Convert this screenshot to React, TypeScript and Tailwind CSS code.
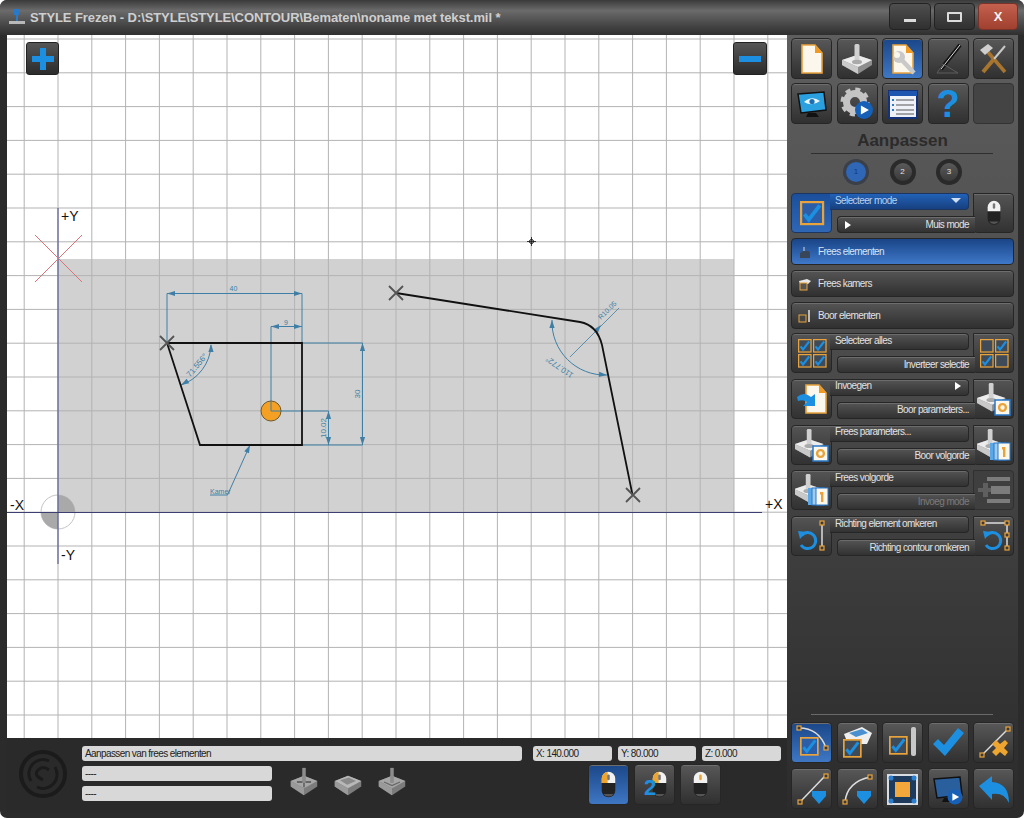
import type { ReactNode } from 'react'

const DIM = '#3f7fa5'
const BLUE = '#1c8fe0'
const ORANGE = '#e8a33c'

function Ic({ children, s = 34, box = 34 }: { children: ReactNode; s?: number; box?: number }) {
  return (
    <svg viewBox={`0 0 ${box} ${box}`} width={s} height={s} className="block shrink-0">
      {children}
    </svg>
  )
}

// icon parts, all in a 34 box
function Page({ x = 0, y = 0 }: { x?: number; y?: number }) {
  return (
    <g transform={`translate(${x} ${y})`}>
      <path d="M7 3h13l7 8v20H7z" fill="#fbf7ec" stroke={ORANGE} strokeWidth="1.6" />
      <path d="M20 3l7 8h-7z" fill="#f09a22" />
    </g>
  )
}

function Mill({ x = 0, y = 0, k = 1 }: { x?: number; y?: number; k?: number }) {
  return (
    <g transform={`translate(${x} ${y}) scale(${k})`}>
      <path d="M17 13L32 18v5L18 32 2 23v-5z" fill="#8d8d8d" />
      <path d="M2 18l15-5 15 5-14 7z" fill="#ececec" />
      <path d="M2 18l16 7v7L2 23z" fill="#c9c9c9" />
      <rect x="14.5" y="2" width="5" height="18" rx="1.5" fill="#d0d0d0" />
      <ellipse cx="17" cy="20" rx="5" ry="2.2" fill="#aaa" />
    </g>
  )
}

function Check({ x = 0, y = 0, k = 1, on = true, fill = '#3f4b58' }: { x?: number; y?: number; k?: number; on?: boolean; fill?: string }) {
  return (
    <g transform={`translate(${x} ${y}) scale(${k})`}>
      <rect x="1" y="1" width="20" height="20" fill={fill} stroke={ORANGE} strokeWidth="2" />
      {on && <path d="M4 12l4 5L18 4" fill="none" stroke={BLUE} strokeWidth="3.500" />}
    </g>
  )
}

function GearBox({ x = 0, y = 0 }: { x?: number; y?: number }) {
  return (
    <g transform={`translate(${x} ${y})`}>
      <rect width="15" height="15" fill="#fbf7ec" stroke="#2a78c8" strokeWidth="1.5" />
      <circle cx="7.5" cy="7.5" r="3.4" fill="none" stroke={ORANGE} strokeWidth="2.4" />
    </g>
  )
}

function Cards({ x = 0, y = 0 }: { x?: number; y?: number }) {
  return (
    <g transform={`translate(${x} ${y})`}>
      <rect x="0" y="1" width="12" height="17" fill="#5aa8e8" />
      <rect x="4" y="1" width="12" height="17" fill="#9ccbf0" stroke="#2a78c8" />
      <rect x="8" y="1" width="12" height="17" fill="#fbf7ec" stroke="#2a78c8" />
      <path d="M12 5h3.4v10h-2.4V7.400h-1z" fill={ORANGE} />
    </g>
  )
}

function Node({ x, y }: { x: number; y: number }) {
  return <rect x={x - 2} y={y - 2} width="4" height="4" fill="#3a3a3a" stroke={ORANGE} strokeWidth="1.2" />
}

function UndoArrow({ x = 0, y = 0 }: { x?: number; y?: number }) {
  return (
    <g transform={`translate(${x} ${y})`} fill="none">
      <path d="M3.500 5.500A8 8 0 1 1 3 15" stroke={BLUE} strokeWidth="3" />
      <path d="M0 1l8 1-6 7z" fill={BLUE} />
    </g>
  )
}

function Playball({ x, y, r = 7 }: { x: number; y: number; r?: number }) {
  return (
    <g>
      <circle cx={x} cy={y} r={r} fill="#1660b8" />
      <path d={`M${x - r * 0.35} ${y - r * 0.5}L${x + r * 0.55} ${y}L${x - r * 0.35} ${y + r * 0.5}z`} fill="#fff" />
    </g>
  )
}

function Monitor({ play = false }: { play?: boolean }) {
  return (
    <Ic>
      <path d="M3 7l26-2 2 18-25 3z" fill={play ? '#2a5f9e' : '#2aa0de'} stroke="#111" strokeWidth="1.500" />
      {!play && <path d="M9 15q8-7 16-1-8 6-16 1z" fill="#e8f6ff" />}
      {!play && <circle cx="17" cy="14.500" r="2.600" fill="#1c6fb0" />}
      <path d="M13 26h8l3 4H11z" fill="#111" />
      {play && <Playball x={24} y={25} r={7.500} />}
    </Ic>
  )
}

function MouseIc({ orange = false, wheel = '#777', w = 17 }: { orange?: boolean; wheel?: string; w?: number }) {
  return (
    <svg viewBox="0 0 20 32" width={w} height={(w * 32) / 20} className="block">
      <rect x="2" y="1" width="16" height="30" rx="8" fill="#222" />
      <path d="M4 27h12q-2 3-6 3t-6-3z" fill="#555" />
      <path d="M2 14V9a8 8 0 0 1 16 0v5z" fill="#f2f2f2" />
      {orange && <path d="M2 14V9a8 8 0 0 1 7-8v13z" fill="#eda52f" />}
      <rect x="8.500" y="4" width="3" height="7" rx="1.500" fill={wheel} />
    </svg>
  )
}

function Btn({ children, active, className = '' }: { children?: ReactNode; active?: boolean; className?: string }) {
  return (
    <div
      className={`flex h-[41px] w-[41px] items-center justify-center rounded-[4px] border border-[#262626] shadow-[inset_0_1px_0_#6e6e6e] ${
        active
          ? 'bg-linear-to-b from-[#1b4788] to-[#3f77c4]'
          : 'bg-linear-to-b from-[#585858] to-[#303030]'
      } ${className}`}
    >
      {children}
    </div>
  )
}

function WideBtn({ icon, label, active }: { icon: ReactNode; label: string; active?: boolean }) {
  return (
    <div
      className={`flex h-[27px] w-[223px] items-center gap-[6px] rounded-[4px] border border-[#262626] pl-[6px] text-[10px] tracking-[-0.6px] ${
        active
          ? 'bg-linear-to-b from-[#1a4588] to-[#3f78c8] text-[#d8e4f4]'
          : 'bg-linear-to-b from-[#555555] to-[#303030] text-[#e2e2e2] shadow-[inset_0_1px_0_#6e6e6e]'
      }`}
    >
      <span className="w-[14px]">{icon}</span>
      {label}
    </div>
  )
}

const SHELL = 'bg-linear-to-b from-[#545454] to-[#323232] border-[#262626] shadow-[inset_0_1px_0_#6c6c6c]'

function Combo({
  left,
  right,
  top,
  bottom,
  topMark,
  bottomMark,
  blue,
  dim,
}: {
  left: ReactNode
  right: ReactNode
  top: string
  bottom: string
  topMark?: ReactNode
  bottomMark?: ReactNode
  blue?: boolean
  dim?: boolean
}) {
  const leftCls = blue ? 'bg-linear-to-b from-[#1b4f9c] to-[#2f67b4] border-[#1c3660]' : SHELL
  const topCls = blue ? 'bg-linear-to-b from-[#2262b8] to-[#17407f] border-[#1c3660] text-[#b8d0ee]' : `${SHELL} text-[#e2e2e2]`
  return (
    <div className="grid h-[40px] w-[223px] grid-cols-[41px_5px_132px_4px_41px] grid-rows-[17px_6px_17px] text-[10px] leading-none tracking-[-0.6px]">
      <div className={`col-start-1 row-span-3 row-start-1 flex items-center justify-center rounded-l-[4px] rounded-br-[4px] border ${leftCls}`}>
        {left}
      </div>
      <div className={`relative z-10 col-span-2 col-start-2 row-start-1 -ml-[2px] flex items-center justify-between rounded-r-[4px] border border-l-0 pb-[2px] pl-[5px] pr-[7px] ${topCls}`}>
        {top}
        {topMark}
      </div>
      <div className={`relative z-10 col-span-2 col-start-3 row-start-3 -mr-[2px] flex items-center justify-between rounded-l-[4px] border border-r-0 pl-[7px] pr-[6px] ${SHELL} ${dim ? 'text-[#7a7a7a]' : 'text-[#e2e2e2]'}`}>
        <span>{bottomMark}</span>
        {bottom}
      </div>
      <div className={`col-start-5 row-span-3 row-start-1 flex items-center justify-center rounded-r-[4px] rounded-bl-[4px] border ${dim ? 'bg-[#3f3f3f] border-[#303030]' : SHELL}`}>
        {right}
      </div>
    </div>
  )
}

function TriR() {
  return <span className="block h-0 w-0 border-y-[4.500px] border-l-[6px] border-y-transparent border-l-white" />
}

function CheckGrid({ states }: { states: boolean[] }) {
  return (
    <Ic s={32} box={32}>
      {states.map((on, i) => (
        <Check key={i} x={2 + (i % 2) * 15} y={2 + Math.floor(i / 2) * 15} k={0.62} on={on} />
      ))}
    </Ic>
  )
}

function Arrow({ x, y, a }: { x: number; y: number; a: number }) {
  return <polygon points="0,0 -8,-2.600 -8,2.600" fill={DIM} transform={`translate(${x} ${y}) rotate(${a})`} />
}

function Cross({ x, y }: { x: number; y: number }) {
  return (
    <path
      d={`M${x - 7} ${y - 7}L${x + 7} ${y + 7}M${x + 7} ${y - 7}L${x - 7} ${y + 7}`}
      stroke="#555"
      strokeWidth="1.800"
    />
  )
}

function Canvas() {
  const cols = Array.from({ length: 23 }, (_, i) => 24.2 + 33.8 * i)
  const rows = Array.from({ length: 21 }, (_, i) => 39 + 33.8 * i)
  return (
    <div className="relative h-[703px] w-[780px] bg-white">
      <svg viewBox="7 35 780 703" width="780" height="703" className="block">
        <rect x="58" y="259" width="676" height="253" fill="#d1d1d1" />
        {cols.map((x) => (
          <line key={x} x1={x} x2={x} y1="35" y2="738" stroke="#b3b3b3" />
        ))}
        {rows.map((y) => (
          <line key={y} y1={y} y2={y} x1="7" x2="787" stroke="#b3b3b3" />
        ))}

        {/* origin */}
        <circle cx="58" cy="512" r="17" fill="none" stroke="#c4c4c4" />
        <path d="M58 512V495A17 17 0 0 1 75 512z" fill="#a9a9a9" />
        <path d="M58 512V529A17 17 0 0 1 41 512z" fill="#a9a9a9" />
        <line x1="58" x2="58" y1="208" y2="564" stroke="#5c6098" strokeWidth="1.200" />
        <line x1="7" x2="762" y1="512.500" y2="512.500" stroke="#3c3f70" strokeWidth="1.200" />
        <path d="M35 235L82 282M82 235L35 282" stroke="#d8737a" strokeWidth="1" />
        <g fontSize="14" fill="#111">
          <text x="61" y="221">+Y</text>
          <text x="61" y="560">-Y</text>
          <text x="10" y="510">-X</text>
          <text x="765" y="509">+X</text>
        </g>

        {/* dimensions of the room */}
        <g stroke={DIM} fill="none">
          <path d="M167 343V293.500H302V343" />
          <path d="M271 411V326.500H302" />
          <path d="M271 411H328.500V445" />
          <path d="M302 343H362.500V445H302" />
          <path d="M211 345A44 44 0 0 1 181 385" />
          <path d="M250 445L227.500 495H210" />
        </g>
        <Arrow x={167} y={293.500} a={180} />
        <Arrow x={302} y={293.500} a={0} />
        <Arrow x={271} y={326.500} a={180} />
        <Arrow x={302} y={326.500} a={0} />
        <Arrow x={328.500} y={411} a={-90} />
        <Arrow x={328.500} y={445} a={90} />
        <Arrow x={362.500} y={343} a={-90} />
        <Arrow x={362.500} y={445} a={90} />
        <Arrow x={211} y={344} a={-90} />
        <Arrow x={181} y={385} a={150} />
        <Arrow x={250} y={445} a={-65} />
        <g fontSize="7" fill={DIM}>
          <text x="233.500" y="291" textAnchor="middle">40</text>
          <text x="286" y="325" textAnchor="middle">9</text>
          <text x="210" y="494">Kamer</text>
          <text transform="translate(360 394) rotate(-90)" textAnchor="middle" fontSize="8">30</text>
          <text transform="translate(326 428) rotate(-90)" textAnchor="middle" fontSize="8">10.02</text>
          <text transform="translate(199 367) rotate(-50)" textAnchor="middle" fontSize="8">71.556°</text>
          <text transform="translate(561 365) rotate(215)" textAnchor="middle" fontSize="8">110.772°</text>
          <text transform="translate(609 312) rotate(-45)" textAnchor="middle" fontSize="7">R10.05</text>
        </g>

        <path d="M167 343H302V445H200z" fill="none" stroke="#111" strokeWidth="1.800" />
        <circle cx="271" cy="411" r="10" fill="#f4a025" stroke="#6d5a2c" />
        <path d="M271 401V411H281" fill="none" stroke={DIM} />

        {/* second contour */}
        <path d="M552 320A53 53 0 0 0 607 375" fill="none" stroke={DIM} />
        <path d="M570 357L619 308" stroke={DIM} strokeWidth="0.800" />
        <Arrow x={552} y={320} a={-90} />
        <Arrow x={607} y={375} a={5} />
        <Arrow x={601} y={325} a={-50} />
        <path d="M396 293L580 322Q597 325 602 345L632.500 495" fill="none" stroke="#111" strokeWidth="1.800" />
        <Cross x={167} y={343} />
        <Cross x={396} y={293} />
        <Cross x={633} y={495} />

        {/* cursor */}
        <circle cx="531.500" cy="241.500" r="2" fill="none" stroke="#111" />
        <path d="M531.500 237V246M527 241.500H536" stroke="#111" strokeWidth="0.800" />
      </svg>

      <div className="absolute left-[19px] top-[7px] flex h-[33px] w-[33px] items-center justify-center rounded-[3px] border border-[#222] bg-linear-to-b from-[#565656] to-[#2c2c2c]">
        <svg viewBox="0 0 22 22" width="22" height="22">
          <path d="M8 0h6v8h8v6h-8v8H8v-8H0V8h8z" fill={BLUE} />
        </svg>
      </div>
      <div className="absolute left-[726px] top-[7px] flex h-[33px] w-[34px] items-center justify-center rounded-[3px] border border-[#222] bg-linear-to-b from-[#565656] to-[#2c2c2c]">
        <span className="block h-[6px] w-[22px] bg-[#1c8fe0]" />
      </div>
    </div>
  )
}

function Readout({ text, className }: { text: string; className: string }) {
  return (
    <div className={`flex h-[15px] items-center rounded-[3px] bg-[#d8d8d8] pl-[3px] text-[10px] tracking-[-0.6px] text-[#222] ${className}`}>
      {text}
    </div>
  )
}

function SmallMill({ kind }: { kind: 'cross' | 'block' | 'stick' }) {
  return (
    <svg viewBox="0 0 34 34" width="30" height="30">
      <path d="M2 16l15-6 15 6v6L17 32 2 22z" fill="#7c7c7c" />
      <path d="M2 16l15-6 15 6-15 8z" fill={kind === 'block' ? '#b8b8b8' : '#a6a6a6'} />
      <path d="M2 16l15 8v8L2 22z" fill="#9a9a9a" />
      {kind === 'block' && <path d="M8 15l10-3 8 4-10 4z" fill="#8a8a8a" />}
      {kind === 'cross' && <path d="M9 17h16M17 11v12" stroke="#666" strokeWidth="2" />}
      {kind !== 'block' && <rect x="15" y="1" width="4" height="17" fill="#8c8c8c" />}
      {kind === 'stick' && <path d="M8 17l9 4 9-4" fill="none" stroke="#666" strokeWidth="1.500" />}
    </svg>
  )
}

function StatusBar() {
  return (
    <div className="flex h-[75px] w-[780px] items-start bg-[#2a2a2a]">
      <div className="ml-[11px] mt-[11px] w-[50px]">
        <svg viewBox="0 0 50 50" width="50" height="50" fill="none" stroke="#1b1b1b">
          <circle cx="25" cy="25" r="22" strokeWidth="4" />
          <path d="M31 12A14 14 0 0 0 13 32" strokeWidth="3" />
          <path d="M19 38A14 14 0 0 0 37 18" strokeWidth="3" />
          <path d="M31 21Q25 16 20 21T25 31" strokeWidth="3" />
          <path d="M36 11L42 18" stroke="#2a2a2a" strokeWidth="4" />
        </svg>
      </div>
      <div className="ml-[14px] flex flex-col">
        <div className="mt-[8px] flex gap-[6px]">
          <Readout text="Aanpassen van frees elementen" className="w-[440px]" />
          <Readout text="X: 140.000" className="ml-[5px] w-[79px]" />
          <Readout text="Y: 80.000" className="w-[78px]" />
          <Readout text="Z: 0.000" className="w-[79px]" />
        </div>
        <div className="mt-[5px] flex">
          <div className="flex flex-col gap-[5px]">
            <Readout text="----" className="w-[190px]" />
            <Readout text="----" className="w-[190px]" />
          </div>
          <div className="ml-[17px] mt-[1px] flex h-[32px] gap-[14px]">
            <SmallMill kind="cross" />
            <SmallMill kind="block" />
            <SmallMill kind="stick" />
          </div>
          <div className="ml-[181px] flex -translate-y-[2px] gap-[5px]">
            <Btn active><MouseIc orange /></Btn>
            <Btn className="relative">
              <span className="translate-x-[5px]"><MouseIc orange /></span>
              <span className="absolute left-[9px] top-[12px] text-[22px] font-bold leading-none text-[#1c8fe0]">2</span>
            </Btn>
            <Btn><MouseIc wheel="#eda52f" /></Btn>
          </div>
        </div>
      </div>
    </div>
  )
}

function Radio({ n, active }: { n: number; active?: boolean }) {
  return (
    <div className={`flex h-[26px] w-[26px] items-center justify-center rounded-full ${active ? 'bg-[#3a3f48]' : 'bg-[#2a2a2a]'}`}>
      <div
        className={`flex items-center justify-center rounded-full text-[8px] ${
          active ? 'h-[20px] w-[20px] bg-[#2f66b5] text-[#123a78]' : 'h-[18px] w-[18px] bg-linear-to-b from-[#5a5a5a] to-[#3a3a3a] text-[#e0e0e0]'
        }`}
      >
        {n}
      </div>
    </div>
  )
}

function SidePanel() {
  return (
    <div className="flex h-[778px] w-[231px] flex-col bg-linear-to-b from-[#5e5e5e] via-[#474747] to-[#2b2b2b] pl-[4px] pt-[3px]">
      <div className="grid w-[223px] grid-cols-[repeat(5,41px)] gap-x-[4.500px] gap-y-[4px]">
        <Btn><Ic><Page /></Ic></Btn>
        <Btn><Ic><Mill /></Ic></Btn>
        <Btn active>
          <Ic>
            <Page />
            <path d="M13 15l15 16" stroke="#c9c9c9" strokeWidth="4.500" />
            <circle cx="13" cy="15" r="6" fill="#c9c9c9" />
            <circle cx="11" cy="13" r="3" fill="#fbf7ec" />
          </Ic>
        </Btn>
        <Btn>
          <Ic>
            <path d="M29 3L10 27" stroke="#111" strokeWidth="4" />
            <path d="M29 3L10 27" stroke="#ddd" strokeWidth="1" />
            <path d="M12 22L6 31H27z" fill="none" stroke="#5c5c5c" />
          </Ic>
        </Btn>
        <Btn>
          <Ic>
            <path d="M10 9L28 30" stroke="#a8752e" strokeWidth="3.500" />
            <path d="M3 8l8-6 5 4-8 7z" fill="#cfcfcf" />
            <path d="M28 4L17 17" stroke="#c8c8c8" strokeWidth="2" />
            <path d="M17 17L6 30" stroke="#a8752e" strokeWidth="4" />
          </Ic>
        </Btn>
        <Btn><Monitor /></Btn>
        <Btn>
          <Ic>
            <circle cx="15" cy="15" r="8.500" fill="none" stroke="#c4c4c4" strokeWidth="7" />
            <circle cx="15" cy="15" r="12.500" fill="none" stroke="#c4c4c4" strokeWidth="4" strokeDasharray="5 4.800" />
            <Playball x={24} y={23} r={9} />
          </Ic>
        </Btn>
        <Btn>
          <Ic>
            <rect x="3" y="4" width="28" height="27" fill="#eef2f8" stroke="#14327a" strokeWidth="2" />
            <rect x="3" y="4" width="28" height="5" fill="#1d55b0" />
            <path d="M10 13h18M10 18h18M10 23h18M10 27h18" stroke="#555" strokeWidth="1.200" />
            <path d="M6 13h2M6 18h2M6 23h2" stroke="#2a78c8" strokeWidth="2" />
          </Ic>
        </Btn>
        <Btn>
          <span className="text-[38px] font-bold leading-none text-[#1c8fe0]">?</span>
        </Btn>
        <div className="h-[41px] w-[41px] rounded-[4px] border border-[#333] bg-[#444]" />
      </div>

      <h1 className="mt-[8px] h-[18px] w-[223px] text-center text-[17px] font-bold leading-[18px] text-[#2b2b2b]">
        Aanpassen
      </h1>
      <div className="ml-[20px] mt-[3px] h-px w-[182px] bg-[#2f2f2f]" />
      <div className="ml-[52px] mt-[5px] flex w-[119px] justify-between">
        <Radio n={1} active />
        <Radio n={2} />
        <Radio n={3} />
      </div>

      <div className="mt-[8px]">
        <Combo
          blue
          left={<Ic s={32} box={32}><Check x={4} y={4} k={1.100} fill="#2c5ea8" /></Ic>}
          right={<MouseIc w={16} />}
          top="Selecteer mode"
          topMark={<span className="block h-0 w-0 border-x-[5px] border-t-[5px] border-x-transparent border-t-[#d0e0f4]" />}
          bottom="Muis mode"
          bottomMark={<TriR />}
        />
      </div>

      <div className="mt-[5px] flex flex-col gap-[5px]">
        <WideBtn
          active
          label="Frees elementen"
          icon={
            <svg viewBox="0 0 14 14" width="14" height="14" className="block">
              <path d="M2 13V8l3-2h6l1 2v5z" fill="#39465a" />
              <path d="M5 6V2h2v4" fill="#8098b8" />
            </svg>
          }
        />
        <WideBtn
          label="Frees kamers"
          icon={
            <svg viewBox="0 0 14 14" width="14" height="14" className="block">
              <path d="M1 4l8-2 4 2-3 3H2z" fill="#e8e8e8" />
              <rect x="2" y="6" width="7" height="7" fill="#555" stroke={ORANGE} />
            </svg>
          }
        />
        <WideBtn
          label="Boor elementen"
          icon={
            <svg viewBox="0 0 14 14" width="14" height="14" className="block">
              <rect x="1" y="6" width="7" height="7" fill="#444" stroke={ORANGE} />
              <rect x="10" y="1" width="2" height="12" fill="#bbb" />
            </svg>
          }
        />
      </div>

      <div className="mt-[4px] flex flex-col gap-[5.750px]">
        <Combo
          left={<CheckGrid states={[true, true, true, true]} />}
          right={<CheckGrid states={[false, true, true, false]} />}
          top="Selecteer alles"
          bottom="Inverteer selectie"
        />
        <Combo
          left={
            <Ic>
              <Page x={4} />
              <path d="M2 15q7-6 14 0l4-3v12H8l4-4q-4-3-9-1z" fill={BLUE} />
            </Ic>
          }
          right={<Ic><Mill x={-2} y={-1} k={0.95} /><GearBox x={18} y={18} /></Ic>}
          top="Invoegen"
          topMark={<TriR />}
          bottom="Boor parameters..."
        />
        <Combo
          left={<Ic><Mill x={-2} y={-1} k={0.95} /><GearBox x={18} y={18} /></Ic>}
          right={<Ic><Mill x={-3} y={-1} k={0.95} /><Cards x={13} y={14} /></Ic>}
          top="Frees parameters..."
          bottom="Boor volgorde"
        />
        <Combo
          dim
          left={<Ic><Mill x={-3} y={-1} k={0.95} /><Cards x={13} y={14} /></Ic>}
          right={
            <Ic>
              <path d="M10 4h23v4H10zM14 13h19v8H14zM10 26h23v4H10z" fill="#7c7c7c" />
              <path d="M1 15h5v-5h5v5h3v4h-3v5H6v-5H1z" fill="#5f5f5f" />
            </Ic>
          }
          top="Frees volgorde"
          bottom="Invoeg mode"
        />
        <Combo
          left={
            <Ic>
              <UndoArrow x={3} y={11} />
              <path d="M27 5V29" stroke="#ddd" strokeWidth="1.500" />
              <Node x={27} y={4} />
              <Node x={27} y={29} />
            </Ic>
          }
          right={
            <Ic>
              <UndoArrow x={6} y={11} />
              <path d="M6 4H30V29" fill="none" stroke="#ddd" strokeWidth="1.500" />
              <Node x={6} y={4} />
              <Node x={30} y={4} />
              <Node x={30} y={16} />
              <Node x={30} y={29} />
            </Ic>
          }
          top="Richting element omkeren"
          bottom="Richting contour omkeren"
        />
      </div>

      <div className="mt-auto">
        <div className="ml-[20px] h-px w-[182px] bg-[#6a6a6a]" />
        <div className="mt-[7px] grid w-[223px] grid-cols-[repeat(5,41px)] gap-x-[4.500px] gap-y-[5.500px] pb-[4px]">
          <Btn active>
            <Ic>
              <path d="M4 3Q24 3 31 23" fill="none" stroke="#ddd" strokeWidth="1.500" />
              <Node x={4} y={3} />
              <Node x={31} y={23} />
              <Check x={5} y={12} k={0.85} fill="#2c5ea8" />
            </Ic>
          </Btn>
          <Btn>
            <Ic>
              <path d="M4 9L22 2l10 6-5 11H8z" fill="#eee" />
              <path d="M9 8l13-4 6 4-12 4z" fill="#4a90d0" />
              <Check x={3} y={14} k={0.85} />
            </Ic>
          </Btn>
          <Btn>
            <Ic>
              <rect x="25" y="2" width="5" height="29" rx="2" fill="#c8c8c8" />
              <Check x={3} y={11} k={0.85} />
            </Ic>
          </Btn>
          <Btn>
            <Ic>
              <path d="M2 19l5-5 6 6L27 3l6 5-19 23z" fill={BLUE} />
            </Ic>
          </Btn>
          <Btn>
            <Ic>
              <path d="M5 30L31 4" stroke="#ddd" strokeWidth="1.500" />
              <Node x={5} y={30} />
              <Node x={31} y={4} />
              <path d="M15 19l4-4 4 4 5-4 3 3-4 5 4 4-3 4-5-4-4 4-4-4 4-4z" fill="#eda52f" />
            </Ic>
          </Btn>
          <Btn>
            <Ic>
              <path d="M5 30L30 4" stroke="#ddd" strokeWidth="1.500" />
              <Node x={5} y={30} />
              <Node x={31} y={4} />
              <path d="M17 19h14v5l-7 8-7-8z" fill={BLUE} />
            </Ic>
          </Btn>
          <Btn>
            <Ic>
              <path d="M5 30Q7 10 30 5" fill="none" stroke="#ddd" strokeWidth="1.500" />
              <Node x={5} y={30} />
              <Node x={30} y={5} />
              <path d="M17 19h14v5l-7 8-7-8z" fill={BLUE} />
            </Ic>
          </Btn>
          <Btn>
            <Ic>
              <rect x="2" y="3" width="29" height="29" fill="#1e3a5c" stroke="#d8dde4" strokeWidth="2" />
              <rect x="9" y="10" width="15" height="15" fill="#f4a83c" />
              <circle cx="5" cy="6" r="2.500" fill="#2a7fd0" />
              <circle cx="28" cy="6" r="2.500" fill="#2a7fd0" />
              <circle cx="5" cy="29" r="2.500" fill="#2a7fd0" />
              <circle cx="28" cy="29" r="2.500" fill="#2a7fd0" />
            </Ic>
          </Btn>
          <Btn><Monitor play /></Btn>
          <Btn>
            <Ic>
              <path d="M2 14L15 4v6q17 1 17 21-5-11-17-9v6z" fill={BLUE} />
            </Ic>
          </Btn>
        </div>
      </div>
    </div>
  )
}

export default function App() {
  return (
    <div className="h-[819px] w-[1024px] overflow-hidden bg-white font-['Liberation_Sans',sans-serif]">
      <div className="flex h-[818px] flex-col rounded-[7px] bg-[#2b2b2b]">
        <header className="flex h-[35px] items-start rounded-t-[7px] bg-linear-to-b from-[#3a3a3a] via-[#6b6b6b] via-30% to-[#2f2f2f] pt-[3px]">
          <div className="ml-[8px] mt-[5px] w-[18px]">
            <svg viewBox="0 0 18 18" width="18" height="18">
              <path d="M6 1h5v6h-1v6H8V7H6z" fill="#2a78c8" />
              <rect x="1" y="13" width="16" height="3" fill="#b8b8b8" />
            </svg>
          </div>
          <span className="ml-[4px] mt-[7px] text-[13px] font-bold leading-[15px] tracking-[-0.09px] text-[#cfcfcf]">
            {'STYLE Frezen - D:\\STYLE\\STYLE\\CONTOUR\\Bematen\\noname met tekst.mil *'}
          </span>
          <div className="ml-auto mr-[6px] flex gap-[3px]">
            <div className="flex h-[27px] w-[42px] items-center justify-center rounded-[4px] border border-[#222] bg-linear-to-b from-[#4f4f4f] to-[#303030] pt-[7px]">
              <span className="block h-[3px] w-[12px] bg-[#dcdcdc]" />
            </div>
            <div className="flex h-[27px] w-[41px] items-center justify-center rounded-[4px] border border-[#222] bg-linear-to-b from-[#4f4f4f] to-[#303030]">
              <span className="block h-[10px] w-[15px] rounded-[1px] border-2 border-[#dcdcdc]" />
            </div>
            <div className="flex h-[27px] w-[40px] items-center justify-center rounded-[4px] border border-[#7a3228] bg-linear-to-b from-[#c4604e] to-[#a0402f] text-[13px] font-bold text-[#f4f4f4]">
              X
            </div>
          </div>
        </header>
        <div className="flex pl-[7px]">
          <div className="flex flex-col">
            <Canvas />
            <StatusBar />
          </div>
          <SidePanel />
        </div>
      </div>
    </div>
  )
}
